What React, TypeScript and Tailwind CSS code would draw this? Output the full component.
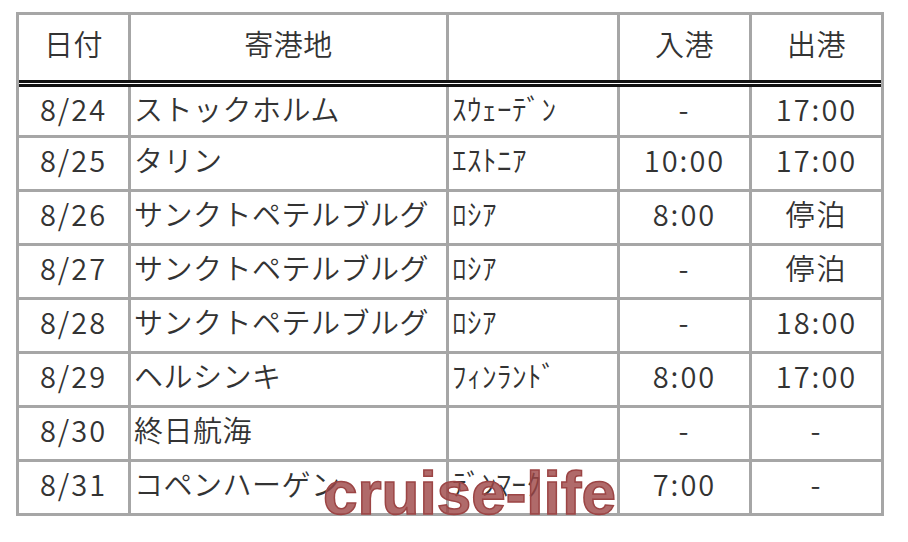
import * as React from "react"

type Row = {
  date: string
  port: string
  country: string
  arrive: string
  depart: string
}

const rows: Row[] = [
  { date: "8/24", port: "ストックホルム", country: "ｽｳｪｰﾃﾞﾝ", arrive: "-", depart: "17:00" },
  { date: "8/25", port: "タリン", country: "ｴｽﾄﾆｱ", arrive: "10:00", depart: "17:00" },
  { date: "8/26", port: "サンクトペテルブルグ", country: "ﾛｼｱ", arrive: "8:00", depart: "停泊" },
  { date: "8/27", port: "サンクトペテルブルグ", country: "ﾛｼｱ", arrive: "-", depart: "停泊" },
  { date: "8/28", port: "サンクトペテルブルグ", country: "ﾛｼｱ", arrive: "-", depart: "18:00" },
  { date: "8/29", port: "ヘルシンキ", country: "ﾌｨﾝﾗﾝﾄﾞ", arrive: "8:00", depart: "17:00" },
  { date: "8/30", port: "終日航海", country: "", arrive: "-", depart: "-" },
  { date: "8/31", port: "コペンハーゲン", country: "ﾃﾞﾝﾏｰｸ", arrive: "7:00", depart: "-" },
]

const grid = "grid grid-cols-[109px_318px_171px_132px_132px]"
const cell = "flex items-center border-l-[3px] border-[#a6a6a6] pb-[7px]"
const num = "tracking-[2px]"

export default function App() {
  return (
    <div className="relative h-[542px] w-[908px] bg-white pl-[16px] pt-[12px] font-['Noto_Sans_CJK_JP','Noto_Sans',sans-serif] text-[29px] font-[350] tracking-[0.5px] text-[#333]">
      <div className="w-[868px] border-[3px] border-[#a6a6a6]">
        <div className={`${grid} h-[65px]`}>
          <div className="flex items-center justify-center pb-[7px]">日付</div>
          <div className={`${cell} justify-center`}>寄港地</div>
          <div className={cell}></div>
          <div className={`${cell} justify-center`}>入港</div>
          <div className={`${cell} justify-center`}>出港</div>
        </div>
        <div className="flex h-[7px] flex-col">
          <div className="h-[3px] bg-[#111]" />
          <div className="h-[1px] bg-white" />
          <div className="h-[3px] bg-[#111]" />
        </div>
        {rows.map((r, i) => (
          <div
            key={r.date}
            className={`${grid} ${i === 0 ? "h-[48px]" : "h-[54px] border-t-[3px] border-[#a6a6a6]"}`}
          >
            <div className={`flex items-center justify-center pb-[7px] ${num}`}>{r.date}</div>
            <div className={`${cell} pl-[3px]`}>{r.port}</div>
            <div className={`${cell} pl-[3px]`}>{r.country}</div>
            <div className={`${cell} justify-center ${num}`}>{r.arrive}</div>
            <div className={`${cell} justify-center ${num}`}>{r.depart}</div>
          </div>
        ))}
      </div>
      <div className="absolute left-[323px] top-[463px] font-['Liberation_Sans',Arial,sans-serif] text-[62px] font-bold leading-[60px] tracking-normal text-[#9c4545]/80 [-webkit-text-stroke:1.5px_#9c4545]">
        cruise-life
      </div>
    </div>
  )
}
